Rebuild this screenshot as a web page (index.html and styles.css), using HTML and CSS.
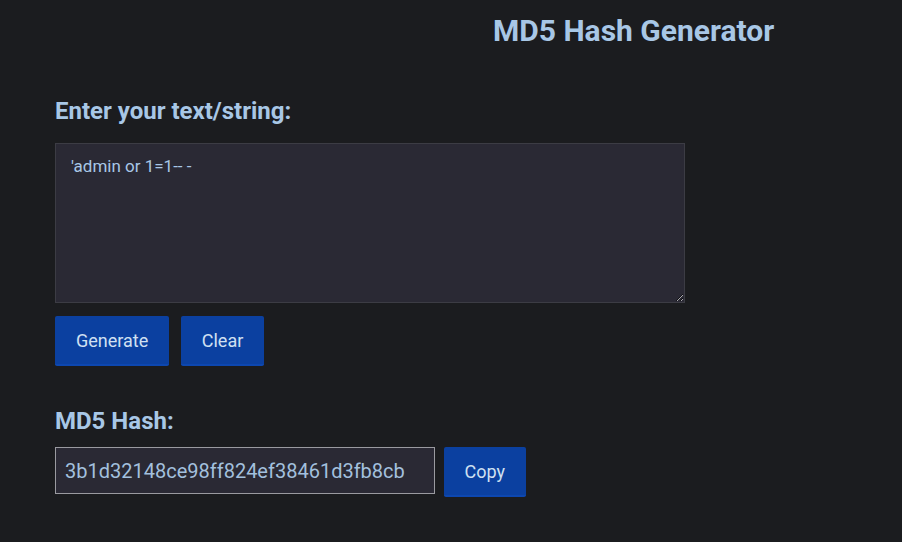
FILE: index.html
```html
<!DOCTYPE html>
<html>
<head>
<meta charset="utf-8">
<link rel="stylesheet" href="styles.css">
</head>
<body>
<h1 class="title">MD5 Hash Generator</h1>
<main class="content">
  <label class="label" for="txt">Enter your text/string:</label>
  <textarea id="txt" class="text-input">'admin or 1=1-- -</textarea>
  <div class="actions">
    <button class="btn btn-generate">Generate</button>
    <button class="btn btn-clear">Clear</button>
  </div>
  <h2 class="label label-hash">MD5 Hash:</h2>
  <div class="hash-row">
    <input class="hash-output" type="text" value="3b1d32148ce98ff824ef38461d3fb8cb" readonly>
    <button class="btn btn-copy">Copy</button>
  </div>
</main>
</body>
</html>
```
FILE: styles.css
```css
html, body {
  margin: 0;
  padding: 0;
  background: #1b1c1f;
  color: #a8c7e6;
  font-family: Roboto, "Liberation Sans", sans-serif;
}
.title {
  margin: 0;
  padding: 13px 0 0 493px;
  font-size: 30px;
  line-height: 36px;
  font-weight: 700;
  color: #a8c7e6;
}
.content {
  padding: 48px 0 0 55px;
  display: flex;
  flex-direction: column;
  align-items: flex-start;
}
.label {
  display: block;
  margin: 0;
  font-size: 24px;
  line-height: 28px;
  font-weight: 700;
  color: #a8c7e6;
}
.text-input {
  box-sizing: border-box;
  margin-top: 18px;
  width: 630px;
  height: 160px;
  padding: 12px 15px;
  background: #2a2934;
  border: 1px solid #3c3c44;
  color: #a8c7e6;
  font-family: Roboto, "Liberation Sans", sans-serif;
  font-size: 17px;
  outline: none;
}
.actions {
  display: flex;
  gap: 12px;
  margin-top: 13px;
}
.btn {
  box-sizing: border-box;
  height: 50px;
  padding: 0 20.5px;
  border: none;
  border-radius: 2px;
  background: #0b40a0;
  border-bottom: 2px solid #0d47b0;
  color: #d0e0f2;
  font-family: Roboto, "Liberation Sans", sans-serif;
  font-size: 18px;
}
.btn-generate {
  padding: 0 21px;
}
.label-hash {
  margin-top: 41px;
}
.hash-row {
  display: flex;
  gap: 9px;
  margin-top: 12px;
  align-items: flex-start;
}
.hash-output {
  box-sizing: border-box;
  width: 380px;
  height: 47px;
  padding: 0 9px;
  background: #2a2934;
  border: 1px solid #9a9aa0;
  color: #a3c0de;
  font-family: Roboto, "Liberation Sans", sans-serif;
  font-size: 20px;
  outline: none;
}
```
